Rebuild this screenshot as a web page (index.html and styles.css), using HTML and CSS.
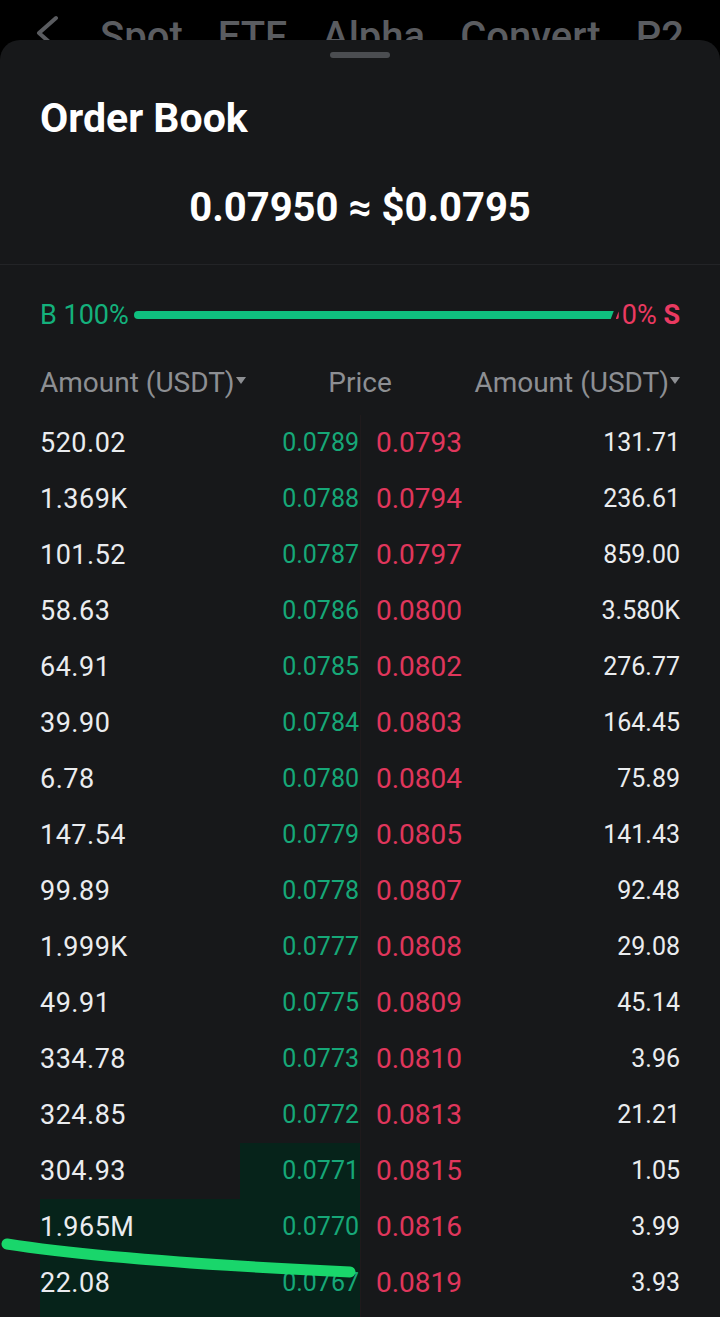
FILE: index.html
```html
<!DOCTYPE html>
<html lang="en">
<head>
  <meta charset="UTF-8">
  <meta name="viewport" content="width=device-width, initial-scale=1.0">
  <title>Order Book</title>
  <link rel="stylesheet" href="styles.css">
</head>

<body>
  <div class="tabs">
    <svg class="back" width="24" height="40" viewBox="0 0 24 40">
      <polyline points="20,18 3,33 20,48" fill="none" stroke="#5a5c60" stroke-width="4" stroke-linecap="round" stroke-linejoin="round"/>
    </svg>
    <span>Spot</span>
    <span>ETF</span>
    <span>Alpha</span>
    <span>Convert</span>
    <span>P2</span>
  </div>

  <div class="sheet">
    <div class="handle"></div>

    <h1>Order Book</h1>
    <div class="lastPrice">0.07950 ≈ $0.0795</div>

    <div class="ratio">
      <span class="buy">B 100%</span>
      <div class="ratioBar">
        <div class="ratioBuy"></div>
        <div class="ratioSell"></div>
      </div>
      <span class="sell">0% <b>S</b></span>
    </div>

    <div class="head">
      <span>Amount (USDT)<svg class="caret" width="10" height="8" viewBox="0 0 10 8"><polygon points="0,0 10,0 5,7" fill="#8d8f93"/></svg></span>
      <span class="headPrice">Price</span>
      <span>Amount (USDT)<svg class="caret" width="10" height="8" viewBox="0 0 10 8"><polygon points="0,0 10,0 5,7" fill="#8d8f93"/></svg></span>
    </div>

    <div class="book">
      <div class="row"><div class="bid"><span class="amt">520.02</span><span class="bidPrice">0.0789</span></div><div class="ask"><span class="askPrice">0.0793</span><span class="amt">131.71</span></div></div>
      <div class="row"><div class="bid"><span class="amt">1.369K</span><span class="bidPrice">0.0788</span></div><div class="ask"><span class="askPrice">0.0794</span><span class="amt">236.61</span></div></div>
      <div class="row"><div class="bid"><span class="amt">101.52</span><span class="bidPrice">0.0787</span></div><div class="ask"><span class="askPrice">0.0797</span><span class="amt">859.00</span></div></div>
      <div class="row"><div class="bid"><span class="amt">58.63</span><span class="bidPrice">0.0786</span></div><div class="ask"><span class="askPrice">0.0800</span><span class="amt">3.580K</span></div></div>
      <div class="row"><div class="bid"><span class="amt">64.91</span><span class="bidPrice">0.0785</span></div><div class="ask"><span class="askPrice">0.0802</span><span class="amt">276.77</span></div></div>
      <div class="row"><div class="bid"><span class="amt">39.90</span><span class="bidPrice">0.0784</span></div><div class="ask"><span class="askPrice">0.0803</span><span class="amt">164.45</span></div></div>
      <div class="row"><div class="bid"><span class="amt">6.78</span><span class="bidPrice">0.0780</span></div><div class="ask"><span class="askPrice">0.0804</span><span class="amt">75.89</span></div></div>
      <div class="row"><div class="bid"><span class="amt">147.54</span><span class="bidPrice">0.0779</span></div><div class="ask"><span class="askPrice">0.0805</span><span class="amt">141.43</span></div></div>
      <div class="row"><div class="bid"><span class="amt">99.89</span><span class="bidPrice">0.0778</span></div><div class="ask"><span class="askPrice">0.0807</span><span class="amt">92.48</span></div></div>
      <div class="row"><div class="bid"><span class="amt">1.999K</span><span class="bidPrice">0.0777</span></div><div class="ask"><span class="askPrice">0.0808</span><span class="amt">29.08</span></div></div>
      <div class="row"><div class="bid"><span class="amt">49.91</span><span class="bidPrice">0.0775</span></div><div class="ask"><span class="askPrice">0.0809</span><span class="amt">45.14</span></div></div>
      <div class="row"><div class="bid"><span class="amt">334.78</span><span class="bidPrice">0.0773</span></div><div class="ask"><span class="askPrice">0.0810</span><span class="amt">3.96</span></div></div>
      <div class="row"><div class="bid"><span class="amt">324.85</span><span class="bidPrice">0.0772</span></div><div class="ask"><span class="askPrice">0.0813</span><span class="amt">21.21</span></div></div>
      <div class="row"><div class="bid"><div class="depth" style="width: 37.5%"></div><span class="amt">304.93</span><span class="bidPrice">0.0771</span></div><div class="ask"><span class="askPrice">0.0815</span><span class="amt">1.05</span></div></div>
      <div class="row"><div class="bid"><div class="depth" style="width: 100%"></div><span class="amt">1.965M</span><span class="bidPrice">0.0770</span></div><div class="ask"><span class="askPrice">0.0816</span><span class="amt">3.99</span></div></div>
      <div class="row"><div class="bid"><div class="depth" style="width: 100%"></div><span class="amt">22.08</span><span class="bidPrice">0.0767</span></div><div class="ask"><span class="askPrice">0.0819</span><span class="amt">3.93</span></div></div>
    </div>
  </div>

  <!-- hand drawn marker stroke on top of the screenshot -->
  <svg class="scribble" width="720" height="60" viewBox="0 0 720 60">
    <path d="M7,6 C90,19 200,27 350,34" fill="none" stroke="#19d66b" stroke-width="11" stroke-linecap="round"/>
  </svg>
</body>
</html>
```

FILE: styles.css
```css
body {
  margin: 0;
  width: 720px;
  height: 1317px;
  overflow: hidden;
  background-color: #000000;
  font-family: Roboto, "Noto Sans", sans-serif;
  color: #eaecef;
  position: relative;
}

.tabs {
  height: 40px;
  overflow: hidden;
  display: flex;
  align-items: flex-start;
  gap: 35px;
  padding-left: 36px;
  padding-top: 17px;
  box-sizing: border-box;
  font-size: 40px;
  font-weight: 500;
  line-height: 40px;
  color: #5a5c60;
}

.back {
  flex: none;
  margin-top: -17px;
  margin-right: 5px;
}

.sheet {
  background-color: #17181a;
  border-radius: 20px 20px 0 0;
  height: 1277px;
  overflow: hidden;
}

.handle {
  width: 60px;
  height: 6px;
  margin: 12px auto 0;
  border-radius: 3px;
  background-color: #4b4d51;
}

h1 {
  margin: 36px 0 0 40px;
  font-size: 41px;
  line-height: 48px;
  font-weight: 700;
  color: #ffffff;
}

.lastPrice {
  margin-top: 42px;
  padding-bottom: 32px;
  font-size: 40px;
  line-height: 48px;
  font-weight: 700;
  color: #ffffff;
  text-align: center;
  border-bottom: 1px solid #232427;
}

.ratio {
  display: flex;
  align-items: center;
  height: 50px;
  margin-top: 25px;
  padding: 0 40px;
  font-size: 27px;
  line-height: 50px;
}

.buy {
  color: #14b17c;
}

.sell {
  color: #ea3a61;
}

.sell b {
  font-weight: 700;
}

.ratioBar {
  flex: 1;
  display: flex;
  align-items: center;
  gap: 2px;
  margin: 0 3px 0 5px;
}

.ratioBuy {
  flex: 1;
  height: 8px;
  background-color: #0fbf7f;
  border-radius: 4px 0 0 4px;
  clip-path: polygon(0 0, 100% 0, calc(100% - 3px) 100%, 0 100%);
}

.ratioSell {
  width: 3px;
  height: 8px;
  background-color: #ea3a61;
  border-radius: 0 2px 2px 0;
  clip-path: polygon(3px 0, 100% 0, 100% 100%, 0 100%);
}

.head {
  display: grid;
  grid-template-columns: 1fr auto 1fr;
  height: 56px;
  margin: 15px 0 4px;
  padding: 0 40px;
  font-size: 28px;
  line-height: 56px;
  color: #8d8f93;
}

.head span:last-child {
  text-align: right;
}

.headPrice {
  text-align: center;
}

.caret {
  margin-left: 1px;
  vertical-align: 7px;
}

.book {
  padding: 0 40px;
}

.row {
  display: grid;
  grid-template-columns: 1fr 1fr;
  height: 56px;
  font-size: 25px;
  line-height: 56px;
}

.bid, .ask {
  display: flex;
  justify-content: space-between;
  position: relative;
}

.ask {
  border-left: 1px solid #1f1a1c;
  padding-left: 15px;
}

.bid .amt {
  font-size: 27px;
  letter-spacing: 0.5px;
}

.bidPrice {
  color: #16a878;
  padding-right: 1px;
  position: relative;
}

.askPrice {
  color: #e0365c;
  font-size: 28px;
}

.amt {
  position: relative;
}

.depth {
  position: absolute;
  top: 0;
  right: 0;
  bottom: 0;
  background-color: #06231a;
}

.row:last-child {
  height: 62px;
}

.scribble {
  position: absolute;
  left: 0;
  top: 1238px;
}
```
